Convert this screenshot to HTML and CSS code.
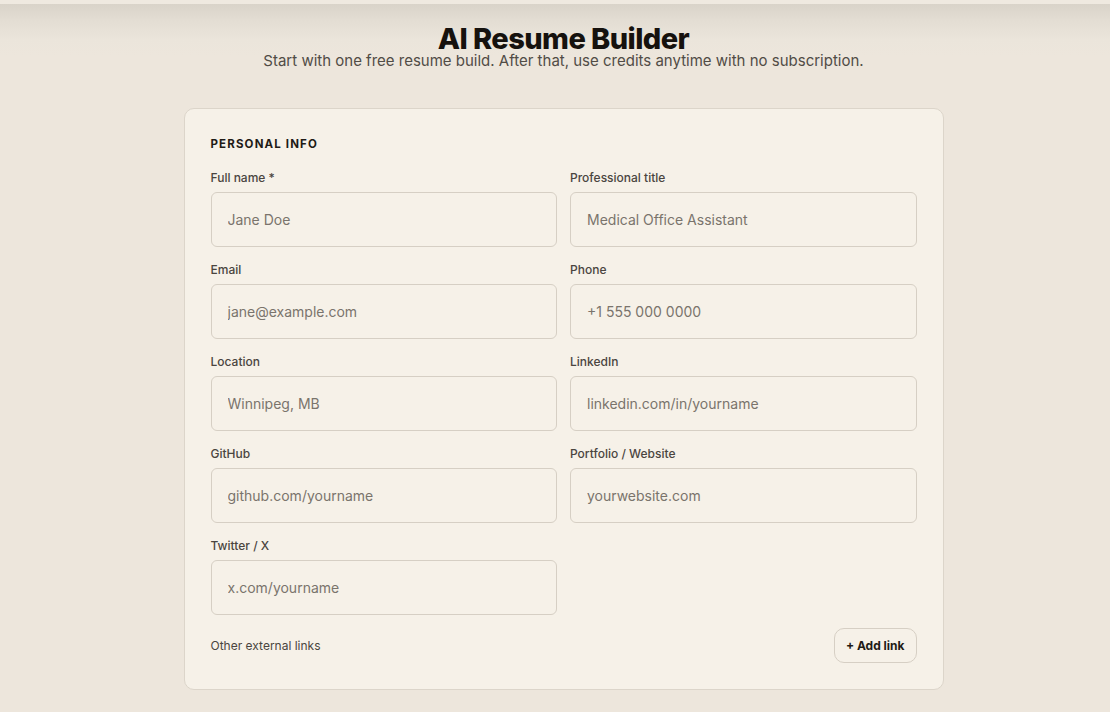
FILE: index.html
```html
<!DOCTYPE html>
<html lang="en">
<head>
<meta charset="utf-8">
<title>AI Resume Builder</title>
<link rel="stylesheet" href="styles.css">
</head>
<body>
<main class="page">
  <header class="hero">
    <h1 class="title">AI Resume Builder</h1>
    <p class="subtitle">Start with one free resume build. After that, use credits anytime with no subscription.</p>
  </header>
  <section class="card">
    <h2 class="section-title">PERSONAL INFO</h2>
    <div class="grid">
      <label class="field"><span class="label">Full name *</span><input class="input" placeholder="Jane Doe"></label>
      <label class="field"><span class="label">Professional title</span><input class="input" placeholder="Medical Office Assistant"></label>
      <label class="field"><span class="label">Email</span><input class="input" placeholder="jane@example.com"></label>
      <label class="field"><span class="label">Phone</span><input class="input" placeholder="+1 555 000 0000"></label>
      <label class="field"><span class="label">Location</span><input class="input" placeholder="Winnipeg, MB"></label>
      <label class="field"><span class="label">LinkedIn</span><input class="input" placeholder="linkedin.com/in/yourname"></label>
      <label class="field"><span class="label">GitHub</span><input class="input" placeholder="github.com/yourname"></label>
      <label class="field"><span class="label">Portfolio / Website</span><input class="input" placeholder="yourwebsite.com"></label>
      <label class="field"><span class="label">Twitter / X</span><input class="input" placeholder="x.com/yourname"></label>
    </div>
    <div class="links-row">
      <span class="links-label">Other external links</span>
      <button class="btn" type="button">+ Add link</button>
    </div>
  </section>
</main>
</body>
</html>
```

FILE: styles.css
```css
html {
  background: #ede6dc;
}
body {
  margin: 0;
  min-height: 712px;
  font-family: Inter, "Noto Sans", sans-serif;
  color: #1f1b16;
  background: linear-gradient(to bottom, #efe9e0 0, #efe9e0 4px, #d9d3c9 4px, #e3ddd3 20px, #ebe5db 40px, #ede6dc 56px);
}
.page {
  padding: 26px 0 40px 17px;
}
.hero {
  text-align: center;
}
.title {
  margin: 0;
  font-size: 29px;
  line-height: 26px;
  font-weight: 800;
  letter-spacing: -0.02em;
  color: #16120e;
}
.subtitle {
  margin: 0;
  font-size: 15px;
  line-height: 18px;
  color: #514c46;
}
.card {
  width: 760px;
  box-sizing: border-box;
  margin: 38px auto 0;
  background: #f6f1e8;
  border: 1px solid #dcd5ca;
  border-radius: 10px;
  padding: 28px 26px 26px;
}
.section-title {
  margin: 0 0 20px;
  font-size: 11.5px;
  line-height: 14px;
  font-weight: 700;
  letter-spacing: 0.1em;
  color: #1f1b16;
}
.grid {
  display: grid;
  grid-template-columns: 1fr 1fr;
  column-gap: 13px;
  row-gap: 16px;
}
.field {
  display: flex;
  flex-direction: column;
  gap: 7px;
}
.label {
  font-size: 12px;
  line-height: 14px;
  font-weight: 500;
  color: #4a4540;
}
.input {
  height: 55px;
  box-sizing: border-box;
  border: 1px solid #d6cfc4;
  border-radius: 6px;
  background: #f6f1e8;
  padding: 0 16px;
  font-family: inherit;
  font-size: 14px;
  color: #1f1b16;
  outline: none;
}
.input::placeholder {
  color: #7a746c;
}
.links-row {
  margin-top: 13px;
  display: flex;
  align-items: center;
  justify-content: space-between;
}
.links-label {
  font-size: 12px;
  color: #4a4540;
}
.btn {
  height: 35px;
  padding: 0 11px;
  border: 1px solid #d6cfc4;
  border-radius: 10px;
  background: #f6f1e8;
  font-family: inherit;
  font-size: 12px;
  font-weight: 700;
  color: #1f1b16;
}
```
